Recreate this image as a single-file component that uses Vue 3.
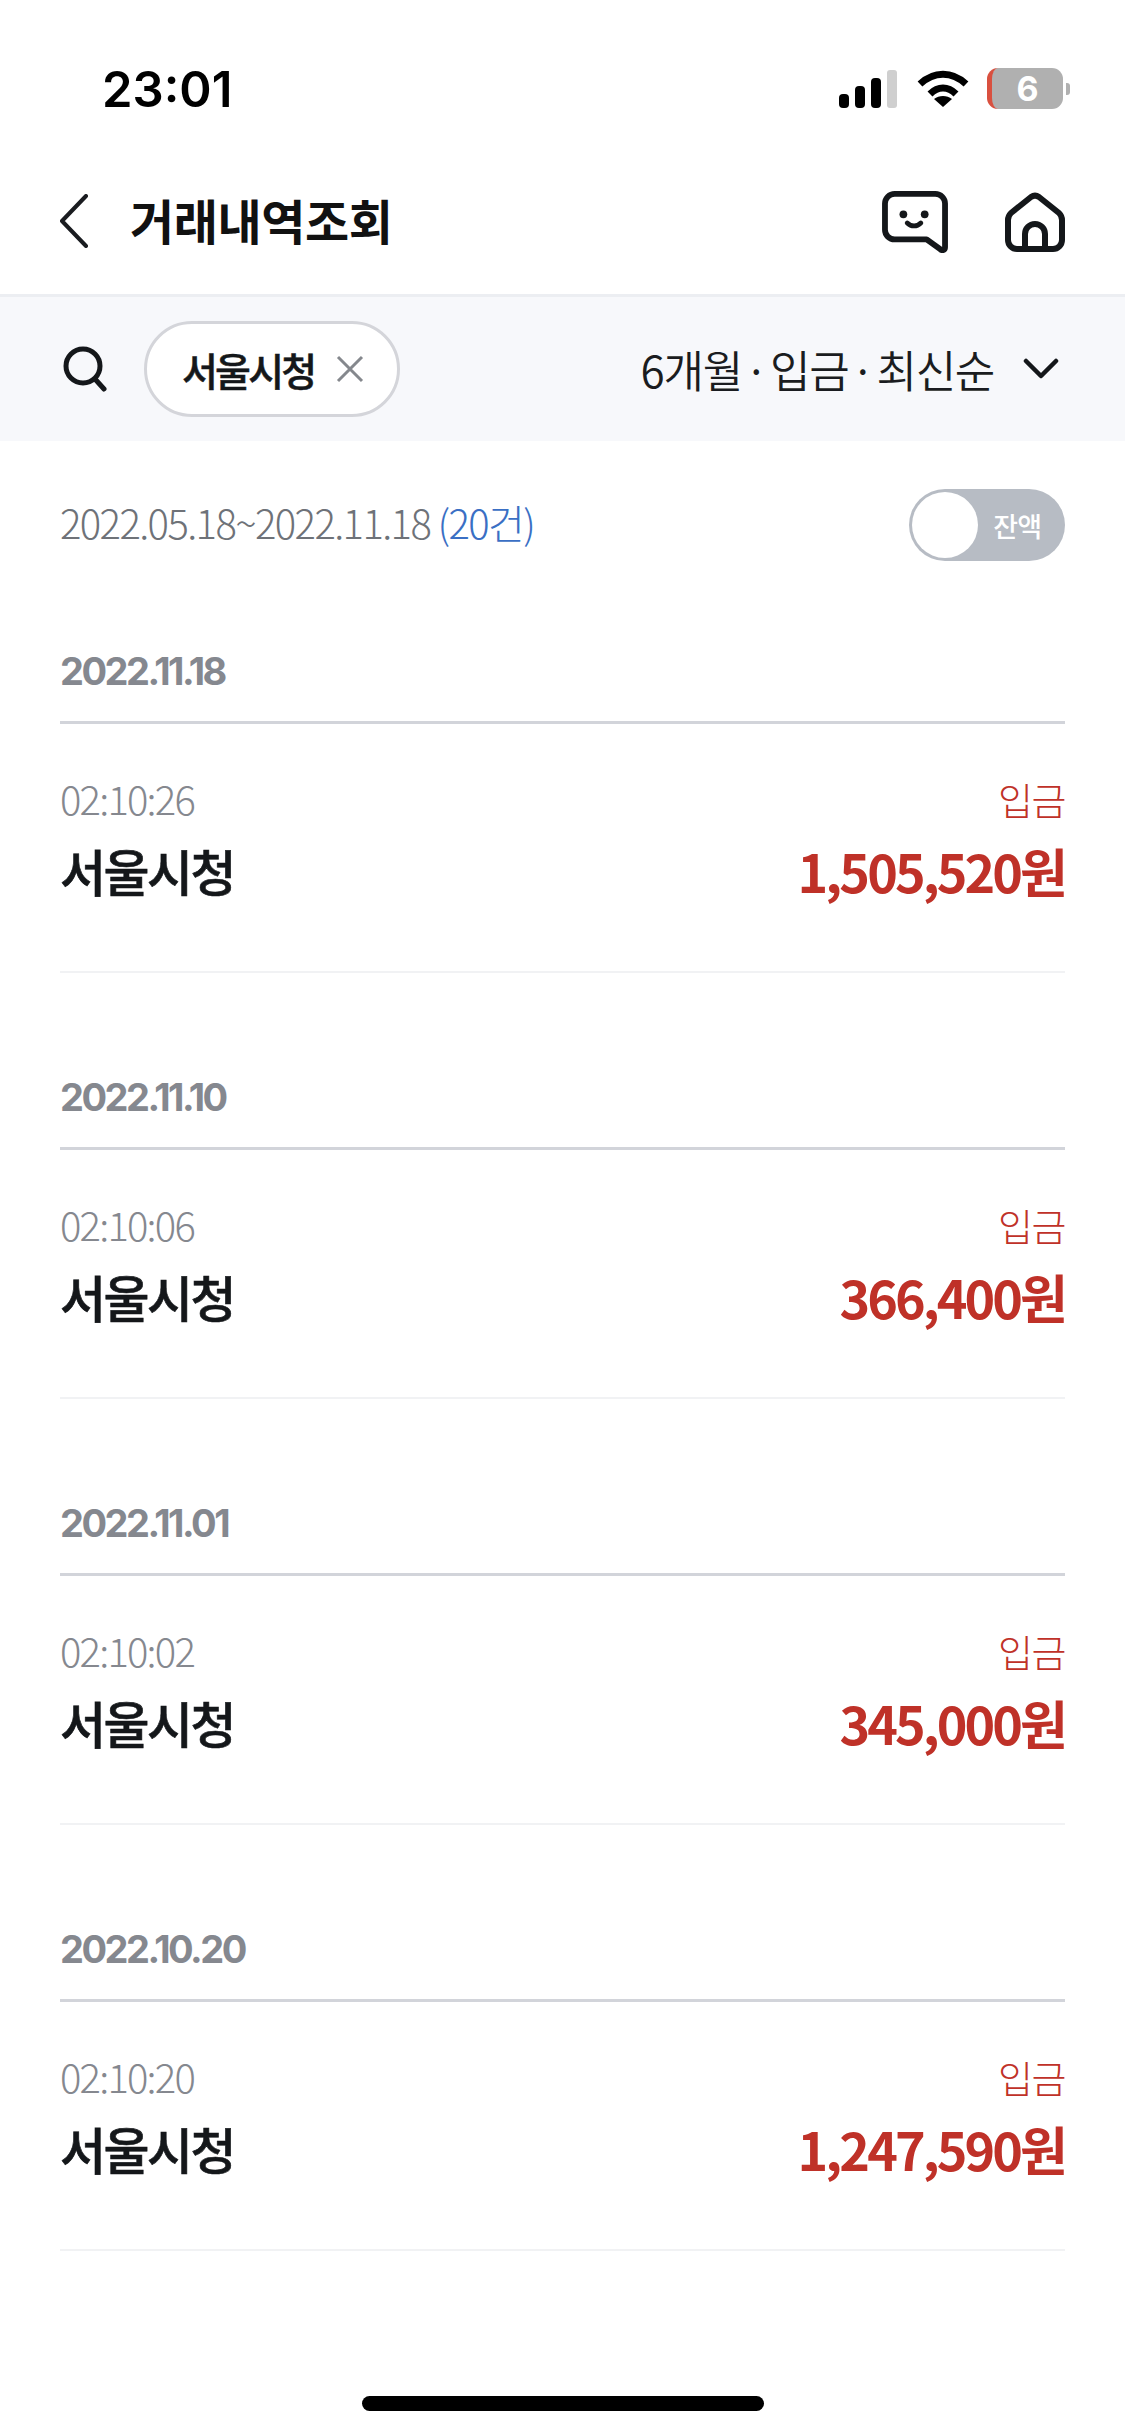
<script setup>
const sections = [
  { date: '2022.11.18', time: '02:10:26', amount: '1,505,520원' },
  { date: '2022.11.10', time: '02:10:06', amount: '366,400원' },
  { date: '2022.11.01', time: '02:10:02', amount: '345,000원' },
  { date: '2022.10.20', time: '02:10:20', amount: '1,247,590원' },
]
</script>

<template>
  <div class="page">
    <div class="status">
      <span class="clock">23:01</span>
      <div class="status-icons">
        <svg width="60" height="38" viewBox="0 0 60 38">
          <rect x="0" y="24" width="10" height="14" rx="4" fill="#000" />
          <rect x="16" y="16" width="10" height="22" rx="4" fill="#000" />
          <rect x="32" y="8" width="10" height="30" rx="4" fill="#000" />
          <rect x="48" y="0" width="10" height="38" rx="3" fill="#cfcfcf" />
        </svg>
        <svg class="wifi" width="52" height="38" viewBox="0 0 52 38">
          <path d="M3 14C17 1 35 1 49 14" fill="none" stroke="#000" stroke-width="7" />
          <path d="M13 24C21 16 31 16 39 24" fill="none" stroke="#000" stroke-width="7" />
          <path d="M26 37L17 29C22 25 30 25 35 29Z" fill="#000" />
        </svg>
        <div class="battery">
          <div class="battery-body"><span>6</span></div>
          <div class="battery-cap"></div>
        </div>
      </div>
    </div>

    <header class="nav">
      <svg class="back" width="30" height="54" viewBox="0 0 30 54">
        <path d="M27 2L3 27L27 52" fill="none" stroke="#1a1c20" stroke-width="4" stroke-linecap="round" stroke-linejoin="round" />
      </svg>
      <h1 class="title">거래내역조회</h1>
      <svg class="chat" width="66" height="62" viewBox="0 0 68 64">
        <path d="M13 3H55A10 10 0 0 1 65 13V58C65 61 62 62 60 60L46 50H13A10 10 0 0 1 3 40V13A10 10 0 0 1 13 3Z" fill="none" stroke="#14171a" stroke-width="6" stroke-linejoin="round" />
        <circle cx="22" cy="24" r="4" fill="#14171a" />
        <circle cx="44" cy="24" r="4" fill="#14171a" />
        <path d="M26 33C30 37 36 37 40 33" fill="none" stroke="#14171a" stroke-width="5" stroke-linecap="round" />
      </svg>
      <svg class="home" width="60" height="60" viewBox="0 0 60 60">
        <path d="M26 5L6 21C4 23 3 25 3 28V48A9 9 0 0 0 12 57H48A9 9 0 0 0 57 48V28C57 25 56 23 54 21L34 5C31 3 29 3 26 5Z" fill="none" stroke="#14171a" stroke-width="6" stroke-linejoin="round" />
        <path d="M20 57V42A10 10 0 0 1 40 42V57" fill="none" stroke="#14171a" stroke-width="6" />
      </svg>
    </header>

    <div class="filter">
      <svg class="search" width="44" height="46" viewBox="0 0 44 46">
        <circle cx="20" cy="20" r="17" fill="none" stroke="#14171a" stroke-width="5" />
        <path d="M32 33L41 43" fill="none" stroke="#14171a" stroke-width="5" stroke-linecap="round" />
      </svg>
      <div class="chip">
        <span>서울시청</span>
        <svg width="28" height="28" viewBox="0 0 28 28">
          <path d="M2 2L26 26M26 2L2 26" fill="none" stroke="#85888d" stroke-width="3" />
        </svg>
      </div>
      <span class="filter-text">6개월 · 입금 · 최신순</span>
      <svg class="chev" width="36" height="24" viewBox="0 0 36 24">
        <path d="M3 4L18 19L33 4" fill="none" stroke="#14171a" stroke-width="4.5" stroke-linecap="round" stroke-linejoin="round" />
      </svg>
    </div>

    <div class="range">
      <span class="range-text">2022.05.18~2022.11.18 <em>(20건)</em></span>
      <div class="toggle">
        <span class="knob"></span>
        <span class="toggle-label">잔액</span>
      </div>
    </div>

    <section v-for="s in sections" :key="s.date" class="group">
      <div class="date">{{ s.date }}</div>
      <div class="row">
        <div class="line">
          <span class="time">{{ s.time }}</span>
          <span class="kind">입금</span>
        </div>
        <div class="line line-main">
          <span class="name">서울시청</span>
          <span class="amount">{{ s.amount }}</span>
        </div>
      </div>
    </section>

    <div class="indicator"></div>
  </div>
</template>

<style>
html, body { margin: 0; background: #fff; }
</style>

<style scoped>
.page {
  width: 1125px;
  height: 2436px;
  position: relative;
  overflow: hidden;
  background: #fff;
  font-family: "Noto Sans CJK KR", "Noto Sans", sans-serif;
  color: #14171a;
}
.status {
  height: 150px;
  box-sizing: border-box;
  padding: 62px 55px 0 102px;
  display: flex;
  justify-content: space-between;
  align-items: flex-start;
}
.clock {
  font-family: Inter, "Liberation Sans", sans-serif;
  font-size: 49px;
  font-weight: 600;
  line-height: 56px;
  color: #000;
}
.status-icons {
  display: flex;
  align-items: center;
  gap: 18px;
  margin-top: 6px;
}
.battery { display: flex; align-items: center; gap: 3px; }
.battery-body {
  width: 76px;
  height: 41px;
  box-sizing: border-box;
  border-radius: 11px;
  background: #b0b0b0;
  border-left: 5px solid #d9503f;
  display: flex;
  align-items: center;
  justify-content: center;
}
.battery-body span {
  font-family: Inter, "Liberation Sans", sans-serif;
  font-size: 34px;
  font-weight: 700;
  color: #fff;
}
.battery-cap { width: 4px; height: 12px; background: #b0b0b0; border-radius: 0 3px 3px 0; }
.nav {
  height: 147px;
  box-sizing: border-box;
  display: flex;
  align-items: center;
  padding: 0 60px 6px 59px;
  border-bottom: 3px solid #eceef2;
}
.back { margin-right: 41px; margin-top: 3px; }
.title {
  margin: 0;
  flex: 1;
  font-size: 48px;
  font-weight: 700;
  letter-spacing: -0.4px;
  color: #111;
}
.chat { margin-right: 57px; margin-top: 6px; }
.home { margin-top: 6px; }
.filter {
  height: 144px;
  box-sizing: border-box;
  display: flex;
  align-items: center;
  padding: 0 66px 0 63px;
  background: #f7f8fb;
}
.search { margin-right: 37px; }
.chip {
  width: 256px;
  height: 96px;
  box-sizing: border-box;
  border: 3px solid #d4d5da;
  border-radius: 48px;
  background: #fff;
  display: flex;
  align-items: center;
  gap: 22px;
  padding-left: 35px;
  font-size: 39px;
  font-weight: 500;
  letter-spacing: -2.8px;
  -webkit-text-stroke: 0.5px #14171a;
  margin-right: auto;
}
.filter-text {
  font-size: 44px;
  letter-spacing: -1.3px;
  word-spacing: -6px;
  margin-right: 29px;
  color: #1a1c20;
  font-weight: 350;
}
.range {
  height: 169px;
  box-sizing: border-box;
  padding: 48px 60px 0;
  display: flex;
  justify-content: space-between;
  align-items: flex-start;
}
.range-text {
  font-size: 40px;
  font-weight: 300;
  letter-spacing: -1.6px;
  line-height: 67px;
  color: #6e7278;
}
.range-text em { font-style: normal; color: #3a6fc4; }
.toggle {
  width: 156px;
  height: 72px;
  border-radius: 36px;
  background: #b7bcc4;
  position: relative;
  display: flex;
  align-items: center;
  justify-content: flex-end;
  padding-right: 24px;
  box-sizing: border-box;
}
.knob {
  position: absolute;
  left: 3px;
  top: 3px;
  width: 66px;
  height: 66px;
  border-radius: 50%;
  background: #fff;
}
.toggle-label {
  color: #fff;
  font-size: 27px;
  letter-spacing: -1px;
  font-weight: 500;
}
.group {
  margin: 0 60px;
  height: 426px;
  box-sizing: border-box;
}
.date {
  height: 114px;
  padding-top: 34px;
  box-sizing: border-box;
  border-bottom: 3px solid #d2d4da;
  font-family: Inter, "Noto Sans CJK KR", sans-serif;
  font-size: 38px;
  line-height: 54px;
  font-weight: 700;
  letter-spacing: -2.5px;
  color: #85888f;
}
.row {
  height: 249px;
  box-sizing: border-box;
  border-bottom: 2px solid #f1f2f4;
  padding-top: 44px;
}
.line {
  display: flex;
  justify-content: space-between;
  align-items: center;
  height: 60px;
}
.line-main { height: 76px; margin-top: 4px; }
.time {
  font-size: 40px;
  font-weight: 300;
  letter-spacing: -1.8px;
  color: #85888f;
}
.kind {
  font-size: 38px;
  font-weight: 300;
  letter-spacing: -1.5px;
  color: #bf3128;
}
.name {
  font-size: 50px;
  font-weight: 500;
  letter-spacing: -2.5px;
  -webkit-text-stroke: 0.6px #14171a;
  color: #14171a;
}
.amount {
  font-size: 52px;
  font-weight: 700;
  letter-spacing: -2.9px;
  color: #bf3128;
}
.indicator {
  position: absolute;
  left: 362px;
  top: 2396px;
  width: 402px;
  height: 15px;
  border-radius: 8px;
  background: #000;
}
</style>
